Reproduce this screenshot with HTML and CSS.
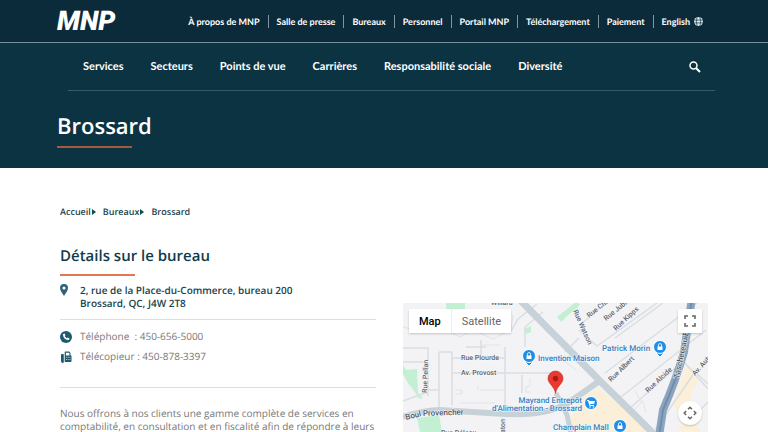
FILE: index.html
```html
<!DOCTYPE html>
<html lang="fr">
<head>
<meta charset="utf-8">
<meta name="viewport" content="width=device-width, initial-scale=1">
<title>Brossard | MNP</title>
<link rel="stylesheet" href="styles.css">
</head>
<body>
<header class="hero">
  <div class="topbar">
    <a class="logo" href="#">MNP</a>
    <nav class="utility" aria-label="Utilitaire">
      <a href="#">À propos de MNP</a>
      <a href="#">Salle de presse</a>
      <a href="#">Bureaux</a>
      <a href="#">Personnel</a>
      <a href="#">Portail MNP</a>
      <a href="#">Téléchargement</a>
      <a href="#">Paiement</a>
      <a href="#" class="lang">English
        <svg class="globe" viewBox="0 0 16 16" aria-hidden="true"><circle cx="8" cy="8" r="8" fill="#dfe9ec"/><path d="M0 5.500h16M0 10.500h16M5.500 0Q3 8 5.500 16M10.500 0Q13 8 10.500 16" fill="none" stroke="#0b2b3a" stroke-width="1.200"/></svg>
      </a>
    </nav>
  </div>
  <div class="mainbar">
    <nav class="primary" aria-label="Principal">
      <a href="#">Services</a>
      <a href="#">Secteurs</a>
      <a href="#">Points de vue</a>
      <a href="#">Carrières</a>
      <a href="#">Responsabilité sociale</a>
      <a href="#">Diversité</a>
    </nav>
    <button class="search" type="button" aria-label="Rechercher">
      <svg viewBox="0 0 12 12" aria-hidden="true"><circle cx="4.500" cy="4.500" r="3.500" fill="none" stroke="#fff" stroke-width="1.500"/><path d="M7.200 7.200 11 11" stroke="#fff" stroke-width="2"/></svg>
    </button>
  </div>
  <h1>Brossard</h1>
</header>
<main>
  <nav class="crumbs" aria-label="Fil d'Ariane">
    <a href="#">Accueil</a>
    <a href="#">Bureaux</a>
    <span>Brossard</span>
  </nav>
  <div class="office">
    <section class="details">
      <h2>Détails sur le bureau</h2>
      <div class="row address">
        <svg class="icon" viewBox="0 0 12 12" aria-hidden="true"><path fill="#2a6479" fill-rule="evenodd" d="M4 0a4 4 0 0 1 4 4C8 6.500 5.500 9.500 4 12 2.500 9.500 0 6.500 0 4a4 4 0 0 1 4-4Zm0 2.400a1.600 1.600 0 1 0 0 3.200 1.600 1.600 0 0 0 0-3.200Z"/></svg>
        <address>2, rue de la Place-du-Commerce, bureau 200<br>Brossard, QC, J4W 2T8</address>
      </div>
      <div class="contacts">
        <div class="row">
          <svg class="icon" viewBox="0 0 12 12" aria-hidden="true"><circle cx="6" cy="6" r="6" fill="#1f5a70"/><path d="M3.300 2.900 4.600 2.500 5.400 4.300 4.700 5.100Q5.300 6.500 6.900 7.300L7.700 6.600 9.500 7.400 9.100 8.800Q8.800 9.200 8 9.100 3.600 8.300 3 3.900 2.900 3.200 3.300 2.900Z" fill="#fff"/></svg>
          <span>Téléphone&nbsp; : 450-656-5000</span>
        </div>
        <div class="row">
          <svg class="icon" viewBox="0 0 12 12" aria-hidden="true"><path d="M1.600 3H3Q3.800 3 3.800 3.800V11Q3.800 12 2.800 12 1 12 1 10V3.700Q1 3 1.600 3ZM4.700 4.500V1.400Q4.700.6 5.500.6H9.200L10.500 2V4.200Q11.500 4.400 11.500 5.200V10Q11.500 11 10.500 11H4.700Z" fill="#1f5a70"/><path d="M5.900 1.800h2.800l.7.800v1.800H5.900Z" fill="#fff"/><path d="M6 6.300h1M7.700 6.300h1M9.400 6.300h1M6 8.500h1M7.700 8.500h1M9.400 8.500h1" stroke="#a9c3cd"/></svg>
          <span>Télécopieur : 450-878-3397</span>
        </div>
      </div>
      <p>Nous offrons à nos clients une gamme complète de services en comptabilité, en consultation et en fiscalité afin de répondre à leurs</p>
    </section>
    <section class="map" aria-label="Carte du bureau de Brossard">
      <svg class="tiles" viewBox="403 303 305 129" aria-hidden="true">
        <rect x="403" y="303" width="305" height="129" fill="#f3f3f5"/>
        <g fill="#c3efd3">
          <path d="M446 303h19v7h-19ZM403 365l3 5 11-1 1 24 5 5-3 1-12-16-5-9ZM417 418l22-3 3 17H420ZM524 329l7-3v6l-5 2ZM557 317l10-8 10-8 3 4-13 11-6 6Z"/>
        </g>
        <path d="M598 388 632 415 655 440H572L568 422 580 399ZM687 365 697 370 698 382 692 390 690 405 679 417 673 402ZM676 430l18-14 6 16Z" fill="#fbefd9"/>
        <g fill="none" stroke="#d9dee3" stroke-width="1.500">
          <path d="M403 348h25v48M403 362h25M439 352h13v53M439 352v55M452 358h53v50M452 373h100M427 390h12M505 347v12M522 375v18M403 401l25-9M502 432v-14M537 304l-19 15-8 14"/>
          <path d="M418 331h30M466 347h20M481 340v15M525 347v-20l18-15"/>
          <path d="M579 330l18 16 60-43M580 325l26-22M615 338l48-35M605 373l92-70M621 397l85-67M630 408l50-44M565 352l14-14M655 430l40-58 13 12M690 420l18-18M684 362l24 27"/>
        </g>
        <g fill="none" stroke="#e0e3e7" stroke-width="1">
          <path d="M403 327l15 4M448 331l12 6 13-7 20 9 18-9 2-15M455 390h7v4h-7M480 390h24M478 386v4M530 378v8l-4 1v5h5M460 403h35M480 345h20M560 358l16 12M635 390l6 13-8 8M642 400l4 12"/>
        </g>
        <g fill="none" stroke="#c7d1d8">
          <path d="M403 417Q425 410 440 410L505 414Q550 416 571 401L598 382" stroke-width="6"/>
          <path d="M518 298 600 381 650 430 666 450" stroke-width="7"/>
          <path d="M556 393 567 415 571 434" stroke-width="5"/>
        </g>
        <path d="M692 298 684 352Q676 380 663 410L657 450" fill="none" stroke="#8ca4bd" stroke-width="8"/>
        <path d="M692 298 684 352Q676 380 663 410L657 450" fill="none" stroke="#6f8ead" stroke-width="2"/>
        <g class="street">
          <text x="491" y="305">Willard</text>
          <text x="461" y="360">Rue Plourde</text>
          <text x="461" y="375">Av. Provost</text>
          <text x="441" y="435">Rue Déleau</text>
          <text class="avenue" transform="translate(406 420) rotate(-14)">Boul</text>
          <text class="avenue" transform="translate(423 416) rotate(-2)">Provencher</text>
          <text transform="translate(427 393) rotate(-88)">Rue Pellan</text>
          <text transform="translate(505 438) rotate(-90)">Naton</text>
          <text transform="translate(573 311) rotate(66)">Rue Watson</text>
          <text transform="translate(589 318) rotate(-38)">Rue Charles</text>
          <text transform="translate(606 321) rotate(-39)">Rue Jubilee</text>
          <text transform="translate(616 331) rotate(-43)">Rue Kipps</text>
          <text transform="translate(611 382) rotate(-44)">Rue Albert</text>
          <text transform="translate(648 393) rotate(-43)">Rue Alcide</text>
          <text transform="translate(695 376) rotate(-48)">Av. Auteuil</text>
          <text class="avenue" transform="translate(679 379) rotate(-78)">Taschereau Blvd</text>
        </g>
        <g class="place">
          <text x="538" y="361">Invention Maison</text>
          <text x="602" y="351">Patrick Morin</text>
          <text x="582" y="403" text-anchor="end">Mayrand Entrepôt</text>
          <text x="582" y="411" text-anchor="end">d'Alimentation - Brossard</text>
          <text x="553" y="430">Champlain Mall</text>
        </g>
        <g class="marker">
          <path d="M529 366l-5-5h10ZM660 357l-5-5h10Z"/>
          <circle cx="529" cy="356" r="6.500"/><circle cx="660" cy="347" r="6.500"/><circle cx="591" cy="403" r="6.500"/><circle cx="620" cy="426" r="6.500"/>
        </g>
        <g fill="#fff">
          <path d="M526.500 355.500h5v3.500h-5ZM657.500 346.500h5v3.500h-5ZM617.500 425.500h5v3.500h-5Z"/>
          <path d="M527.500 356v-2a1.500 1.500 0 0 1 3 0v2M658.500 347v-2a1.500 1.500 0 0 1 3 0v2M618.500 426v-2a1.500 1.500 0 0 1 3 0v2" fill="none" stroke="#fff" stroke-width=".8"/>
          <path d="M587 400h2l.5 1H595l-1 3h-4l.3 1H594v1h-4.500l-1.500-5h-1Z"/><circle cx="590" cy="407" r=".8"/><circle cx="593.500" cy="407" r=".8"/>
        </g>
        <path d="M555.500 393.500C554.500 386 548 384 548 378.500a7.500 7.500 0 0 1 15 0C563 384 556.500 386 555.500 393.500Z" fill="#e93a30" stroke="#c5251c" stroke-width=".6"/>
        <circle cx="555.500" cy="378.500" r="2.700" fill="#a91b14"/>
      </svg>
      <div class="maptype">
        <button type="button" class="current">Map</button>
        <button type="button">Satellite</button>
      </div>
      <button type="button" class="control fullscreen" aria-label="Plein écran"><svg viewBox="0 0 12 12" aria-hidden="true"><path d="M1 4V1h3M8 1h3v3M11 8v3H8M4 11H1V8" fill="none" stroke="#666" stroke-width="1.600"/></svg></button>
      <button type="button" class="control pan" aria-label="Déplacer la carte"><svg viewBox="0 0 14 14" aria-hidden="true"><path d="M5 3.200 7 1.200l2 2M5 10.800l2 2 2-2M3.200 5l-2 2 2 2M10.800 5l2 2-2 2" fill="none" stroke="#666" stroke-width="1.500"/></svg></button>
    </section>
  </div>
</main>
</body>
</html>
```
FILE: styles.css
```css
* {
  box-sizing: border-box;
}

body {
  margin: 0;
  height: 100vh;
  overflow: hidden;
  background: #fff;
  color: #777;
  font-family: "Open Sans", "Noto Sans", sans-serif;
  font-size: 10px;
  line-height: 13px;
  text-rendering: geometricPrecision;
}

a {
  color: inherit;
  text-decoration: none;
}

button {
  border: 0;
  padding: 0;
  background: none;
  font: inherit;
  cursor: pointer;
}

svg {
  display: block;
}

.hero {
  padding-bottom: 20px;
  background: #0c3342;
  color: #fff;
}

.topbar {
  display: flex;
  align-items: center;
  justify-content: space-between;
  height: 43px;
  padding: 0 65px 0 57px;
  border-bottom: 1px solid #6f929b;
  background: #0b2b3a;
}

.logo {
  font-family: Roboto, sans-serif;
  font-size: 27px;
  font-style: italic;
  font-weight: 900;
  line-height: 26px;
}

.utility {
  display: flex;
  font-family: Lato, sans-serif;
  font-size: 9px;
  font-weight: 700;
}

.utility a {
  padding: 0 8px;
  border-left: 1px solid #80959d;
}

.utility a:first-child {
  border-left: 0;
}

.utility .lang {
  display: flex;
  align-items: center;
  gap: 4px;
  padding-right: 0;
}

.globe {
  width: 9px;
  height: 9px;
}

.mainbar {
  display: flex;
  align-items: center;
  justify-content: space-between;
  height: 48px;
  margin: 0 53px 0 68px;
  padding: 0 14px 0 15px;
  border-bottom: 1px solid #395b68;
}

.primary {
  display: flex;
  gap: 27px;
  font-family: Lato, sans-serif;
  font-size: 11px;
  font-weight: 700;
}

.search svg {
  width: 12px;
  height: 12px;
}

h1,
h2 {
  margin: 0;
  font-weight: 600;
}

h1 {
  margin: 20px 57px 0;
  font-size: 22px;
  line-height: 30px;
}

h1::after,
h2::after {
  content: "";
  display: block;
  width: 75px;
  height: 2px;
  margin-top: 5px;
}

h1::after {
  background: #a9583f;
}

h2::after {
  background: #e0794f;
}

main {
  padding: 37px 60px 0;
}

.crumbs {
  display: flex;
  gap: 7px;
  color: #1c3f4c;
  font-size: 9px;
  font-weight: 600;
}

.crumbs a {
  display: flex;
  align-items: center;
  gap: 1px;
}

.crumbs a::after {
  content: "";
  border: 3px solid transparent;
  border-right: 0;
  border-left: 4px solid #075147;
}

.office {
  display: grid;
  grid-template-columns: 316fr 305fr;
  gap: 27px;
  align-items: start;
  margin-top: 25px;
}

h2 {
  margin-bottom: 8px;
  color: #123c4c;
  font-size: 15px;
  line-height: 26px;
}

.row {
  display: flex;
  gap: 8px;
}

.icon {
  flex: none;
  width: 12px;
  height: 12px;
}

.address {
  padding-bottom: 9px;
  border-bottom: 1px solid #dcdfe1;
}

address {
  color: #20444f;
  font-style: normal;
  font-weight: 600;
}

.contacts {
  display: grid;
  gap: 7px;
  padding: 10px 0 24px;
  border-bottom: 1px solid #dcdfe1;
}

.contacts .icon {
  margin-top: 1px;
}

p {
  margin: 19px 0 0;
}

.map {
  position: relative;
  margin-top: 60px;
}

.tiles {
  width: 100%;
}

.street {
  fill: #5b6470;
  font-family: Roboto, sans-serif;
  font-size: 7px;
  font-weight: 500;
}

.street text,
.place text {
  stroke: #f8f9fa;
  stroke-width: 1px;
  paint-order: stroke;
}

.street .avenue {
  font-size: 8px;
  fill: #4b5563;
}

.place {
  fill: #347fc5;
  font-family: Roboto, sans-serif;
  font-size: 8px;
  font-weight: 500;
}

.marker {
  fill: #1e8fe8;
  stroke: #fff;
  stroke-width: 1px;
}

.maptype {
  position: absolute;
  top: 6px;
  left: 6px;
  display: flex;
  height: 24px;
  background: #fff;
  box-shadow: 0 1px 2px #0003;
  font-family: Roboto, sans-serif;
  font-size: 11px;
}

.maptype button {
  padding: 0 10px;
  color: #666;
}

.maptype .current {
  border-right: 1px solid #eee;
  color: #000;
  font-weight: 500;
}

.control {
  position: absolute;
  right: 6px;
  display: grid;
  place-items: center;
  width: 24px;
  height: 24px;
  background: #fff;
  box-shadow: 0 1px 2px #0003;
}

.control svg {
  width: 12px;
  height: 12px;
}

.fullscreen {
  top: 6px;
}

.pan {
  top: 98px;
  border-radius: 50%;
}

.pan svg {
  width: 14px;
  height: 14px;
}
```
